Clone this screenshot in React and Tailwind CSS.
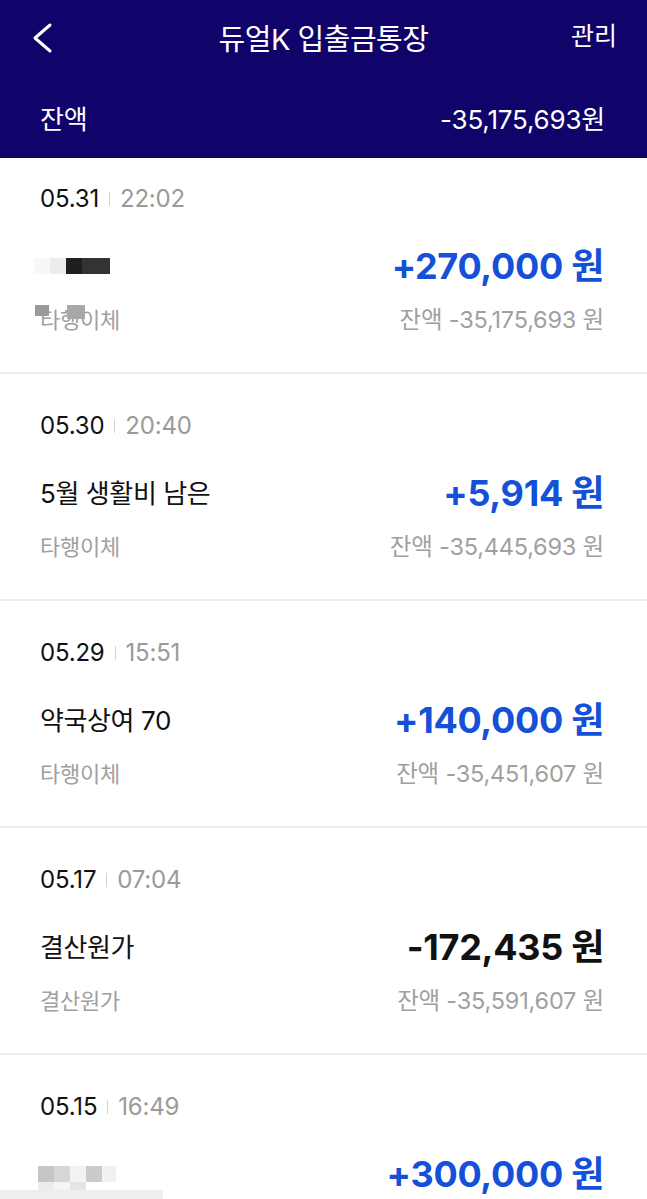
const rows = [
  { date: "05.31", time: "22:02", name: null, sub: "타행이체", amount: "+270,000 원", balance: "잔액 -35,175,693 원", plus: true, mask: "first" },
  { date: "05.30", time: "20:40", name: "5월 생활비 남은", sub: "타행이체", amount: "+5,914 원", balance: "잔액 -35,445,693 원", plus: true },
  { date: "05.29", time: "15:51", name: "약국상여 70", sub: "타행이체", amount: "+140,000 원", balance: "잔액 -35,451,607 원", plus: true },
  { date: "05.17", time: "07:04", name: "결산원가", sub: "결산원가", amount: "-172,435 원", balance: "잔액 -35,591,607 원", plus: false },
  { date: "05.15", time: "16:49", name: null, sub: null, amount: "+300,000 원", balance: null, plus: true, mask: "last" },
];

function MaskFirst() {
  return (
    <div className="flex h-[16px]">
      <div className="w-[16px] bg-[#f8f8f8]" />
      <div className="w-[16px] bg-[#ececec]" />
      <div className="w-[16px] bg-[#1f1f1f]" />
      <div className="w-[28px] bg-[#333333]" />
    </div>
  );
}

function MaskLast() {
  return (
    <div className="flex flex-col">
      <div className="flex h-[16px]">
        <div className="w-[16px] bg-[#c6c6c6]" />
        <div className="w-[16px] bg-[#d7d7d7]" />
        <div className="w-[16px] bg-[#f3f3f3]" />
        <div className="w-[16px] bg-[#cbcbcb]" />
        <div className="w-[14px] bg-[#f1f1f1]" />
      </div>
      <div className="flex h-[16px]">
        <div className="w-[16px] bg-[#ececec]" />
        <div className="w-[16px] bg-[#f5f5f5]" />
        <div className="w-[16px] bg-[#e5e5e5]" />
      </div>
    </div>
  );
}

function Row({ row, index }) {
  const first = index === 0;
  return (
    <div className={`${first ? "pt-[26px]" : "pt-[37px]"} pb-[37px] pl-[40px] pr-[43px] border-b-2 border-[#ececec]`}>
      <div className="flex items-center h-[30px] text-[24px] tracking-[-0.2px]">
        <span className="text-[#111]">{row.date}</span>
        <span className="mx-[10px] w-px h-[14px] bg-[#d4d4d4]" />
        <span className="text-[#9a9a9a]">{row.time}</span>
      </div>
      <div className="mt-[32px] flex items-center justify-between h-[40px]">
        <div className="text-[26px] text-[#111] tracking-[-0.4px]">
          {row.mask === "first" && <div className="-ml-[6px]"><MaskFirst /></div>}
          {row.mask === "last" && <div className="-ml-[2px] mt-[16px]"><MaskLast /></div>}
          {row.name}
        </div>
        <div className={`text-[36px] font-bold tracking-[-0.3px] ${row.plus ? "text-[#1450d8]" : "text-[#111]"}`}>
          {row.amount}
        </div>
      </div>
      {row.sub && (
        <div className="mt-[19px] flex items-center justify-between h-[30px] text-[23.5px] text-[#a0a0a0] tracking-[-0.2px]">
          <div className="relative text-[22px]">
            {row.sub}
            {row.mask === "first" && (
              <>
                <span className="absolute left-[-5px] top-[1px] w-[14px] h-[11px] bg-[#9a9a9a]" />
                <span className="absolute left-[27px] top-[1px] w-[18px] h-[14px] bg-[#a8a8a8]" />
              </>
            )}
          </div>
          <div>{row.balance}</div>
        </div>
      )}
    </div>
  );
}

export default function App() {
  return (
    <div className="w-[647px] h-[1199px] overflow-hidden bg-white relative" style={{ fontFamily: 'Inter, "Noto Sans CJK KR", sans-serif' }}>
      <div className="bg-[#10046a] h-[158px] text-white">
        <div className="relative flex items-center justify-center h-[80px]">
          <svg className="absolute left-[30px] top-[22px]" width="24" height="32" viewBox="0 0 24 32" fill="none">
            <polyline points="20,3 5,16 20,29" stroke="white" strokeWidth="3" strokeLinecap="round" strokeLinejoin="round" />
          </svg>
          <span className="text-[29px] tracking-[-0.5px]">듀얼K 입출금통장</span>
          <span className="absolute right-[30px] top-[18px] text-[25px]">관리</span>
        </div>
        <div className="flex items-center justify-between h-[78px] pl-[40px] pr-[42px] text-[26px] tracking-[-0.2px]">
          <span>잔액</span>
          <span>-35,175,693원</span>
        </div>
      </div>
      {rows.map((row, i) => (
        <Row key={row.date} row={row} index={i} />
      ))}
      <div className="absolute left-0 bottom-0 w-[163px] h-[9px] bg-[#eeeeee]" />
    </div>
  );
}
